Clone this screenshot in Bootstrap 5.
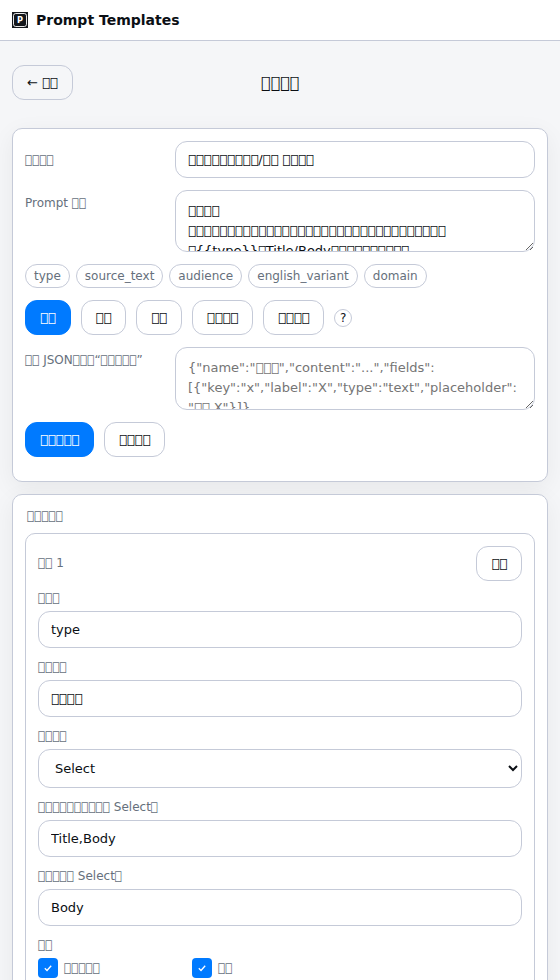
<!DOCTYPE html>
<html lang="zh-CN">
<head>
<meta charset="utf-8">
<meta name="viewport" content="width=device-width, initial-scale=1">
<title>Prompt Templates</title>
<link href="https://cdn.jsdelivr.net/npm/bootstrap@5.3.0/dist/css/bootstrap.min.css" rel="stylesheet">
<style>
:root{--line:#c5cad8;--ink:#0b0f14;--muted:#66707c;--accent:#007aff}
body{font:13px/1.5 "DejaVu Sans",sans-serif;color:var(--ink);background:#f5f6f8}
.topbar{height:41px;border-bottom:1px solid var(--line);padding:0 12px;gap:8px;font-size:14px}
.page-head{padding:24px 12px 28px;display:grid;grid-template-columns:1fr auto 1fr;align-items:center}
.page-title{font-size:16px;font-weight:600;line-height:24px}
.panel{background:#fff;border:1px solid var(--line);border-radius:10px;padding:12px;margin:0 12px 12px;box-shadow:0 6px 24px rgba(0,0,0,.06)}
.editor{display:flex;flex-direction:column;gap:12px;padding-bottom:24px}
.editor-row{display:grid;grid-template-columns:140px minmax(0,1fr);gap:10px}
.caption{font-size:12px;line-height:18px;color:var(--muted)}
.group-name{margin-bottom:2px}
.group-title{padding-left:2px}
.gap-chip{gap:6px}
.gap-btn{gap:10px}
.form-control,.pick{display:block;width:100%;height:37px;font-size:13px;line-height:15px;padding:10px 12px;border:1px solid var(--line);border-radius:12px;color:var(--ink);background-color:#fff}
textarea.form-control{height:62px;min-height:62px;line-height:20px;overflow:hidden;resize:both}
textarea.import-box{height:63px}
.form-control::placeholder{color:#757575;opacity:1}
.pick{height:39px}
.btn{--bs-btn-font-size:13px;--bs-btn-padding-x:14px;--bs-btn-padding-y:8px;--bs-btn-line-height:17px;--bs-btn-border-radius:12px;--bs-btn-color:#0b0f14;--bs-btn-border-color:#c5cad8;height:35px;white-space:nowrap}
.btn-primary{--bs-btn-color:#fff;--bs-btn-bg:#007aff;--bs-btn-border-color:#007aff}
.plain{background:#fff}
.chip{height:24px;line-height:22px;padding:0 8px;border:1px solid var(--line);border-radius:12px;font-size:12px;color:var(--muted);background:#fff}
.hint{width:18px;height:18px;border:1px solid var(--line);border-radius:50%;font-size:12px;line-height:16px;text-align:center}
.field-box{border:1px solid var(--line);border-radius:10px;padding:12px}
.field-item{margin-top:10px}
.field-item .caption{display:block;margin-bottom:4px}
.tick{width:20px;height:20px;border-radius:4px;background:var(--accent)}
.checks{display:grid;grid-template-columns:144px 1fr;column-gap:10px}
</style>
<script src="https://cdn.jsdelivr.net/npm/bootstrap@5.3.0/dist/js/bootstrap.bundle.min.js"></script>
</head>
<body>
<header class="topbar d-flex align-items-center bg-white">
  <svg width="16" height="16" viewBox="0 0 16 16"><path fill="#14171c" d="M0 0h16v16H0z"/><rect x="1.5" y="1.5" width="13" height="13" rx="2.2" fill="none" stroke="#fff" stroke-width=".9"/><text x="8.1" y="11" text-anchor="middle" font-family="DejaVu Sans" font-size="8.2" font-weight="700" fill="#fff">P</text></svg>
  <strong>Prompt Templates</strong>
</header>
<div class="page-head">
  <div><button class="btn">← &#983040;&#983040;</button></div>
  <h1 class="page-title m-0">&#983040;&#983040;&#983040;&#983040;</h1>
</div>
<main>
  <section class="panel editor">
    <div class="editor-row align-items-center">
      <label class="caption">&#983040;&#983040;&#983040;&#983040;</label>
      <input class="form-control" value="&#983040;&#983040;&#983040;&#983040;&#983040;&#983040;&#983040;&#983040;&#983040;/&#983040;&#983040; &#983040;&#983040;&#983040;&#983040;">
    </div>
    <div class="editor-row">
      <label class="caption pt-1">Prompt &#983040;&#983040;</label>
      <textarea class="form-control">&#983040;&#983040;&#983040;&#983040;
&#983040;&#983040;&#983040;&#983040;&#983040;&#983040;&#983040;&#983040;&#983040;&#983040;&#983040;&#983040;&#983040;&#983040;&#983040;&#983040;&#983040;&#983040;&#983040;&#983040;&#983040;&#983040;&#983040;&#983040;&#983040;&#983040;&#983040;&#983040;&#983040;&#983040;&#983040;&#983040;&#983040;
&#983040;{{type}}&#983040;Title/Body&#983040;&#983040;&#983040;&#983040;&#983040;&#983040;&#983040;&#983040;&#983040;&#983040;</textarea>
    </div>
    <div class="d-flex gap-chip">
      <span class="chip">type</span><span class="chip">source_text</span><span class="chip">audience</span><span class="chip">english_variant</span><span class="chip">domain</span>
    </div>
    <div class="d-flex align-items-center gap-btn">
      <button class="btn btn-primary">&#983040;&#983040;</button>
      <button class="btn plain">&#983040;&#983040;</button>
      <button class="btn plain">&#983040;&#983040;</button>
      <button class="btn plain">&#983040;&#983040;&#983040;&#983040;</button>
      <button class="btn plain">&#983040;&#983040;&#983040;&#983040;</button>
      <span class="hint">?</span>
    </div>
    <div class="editor-row">
      <label class="caption pt-1">&#983040;&#983040; JSON&#983040;&#983040;&#983040;“&#983040;&#983040;&#983040;&#983040;&#983040;”</label>
      <textarea class="form-control import-box" placeholder='{"name":"&#983040;&#983040;&#983040;","content":"...","fields":&#10;[{"key":"x","label":"X","type":"text","placeholder":&#10;"&#983040;&#983040; X"}]}'></textarea>
    </div>
    <div class="d-flex gap-btn">
      <button class="btn btn-primary">&#983040;&#983040;&#983040;&#983040;&#983040;</button>
      <button class="btn plain">&#983040;&#983040;&#983040;&#983040;</button>
    </div>
  </section>
  <section class="panel">
    <div class="caption mb-2 group-title">&#983040;&#983040;&#983040;&#983040;&#983040;</div>
    <div class="field-box">
      <div class="d-flex align-items-center justify-content-between">
        <span class="caption group-name">&#983040;&#983040; 1</span>
        <button class="btn plain">&#983040;&#983040;</button>
      </div>
      <div class="field-item mt-2"><label class="caption">&#983040;&#983040;&#983040;</label><input class="form-control" value="type"></div>
      <div class="field-item"><label class="caption">&#983040;&#983040;&#983040;&#983040;</label><input class="form-control" value="&#983040;&#983040;&#983040;&#983040;"></div>
      <div class="field-item"><label class="caption">&#983040;&#983040;&#983040;&#983040;</label><select class="pick"><option>Select</option></select></div>
      <div class="field-item"><label class="caption">&#983040;&#983040;&#983040;&#983040;&#983040;&#983040;&#983040;&#983040;&#983040;&#983040; Select&#983040;</label><input class="form-control" value="Title,Body"></div>
      <div class="field-item"><label class="caption">&#983040;&#983040;&#983040;&#983040;&#983040; Select&#983040;</label><input class="form-control" value="Body"></div>
      <div class="field-item">
        <span class="caption">&#983040;&#983040;</span>
        <div class="checks">
          <label class="d-flex align-items-center caption m-0 gap-chip"><svg class="tick" viewBox="0 0 20 20"><path d="M6.8 10.3l2.2 2.2 4.2-4.8" fill="none" stroke="#fff" stroke-width="1.3"/></svg>&#983040;&#983040;&#983040;&#983040;&#983040;</label>
          <label class="d-flex align-items-center caption m-0 gap-chip"><svg class="tick" viewBox="0 0 20 20"><path d="M6.8 10.3l2.2 2.2 4.2-4.8" fill="none" stroke="#fff" stroke-width="1.3"/></svg>&#983040;&#983040;</label>
        </div>
      </div>
    </div>
  </section>
</main>
</body>
</html>
